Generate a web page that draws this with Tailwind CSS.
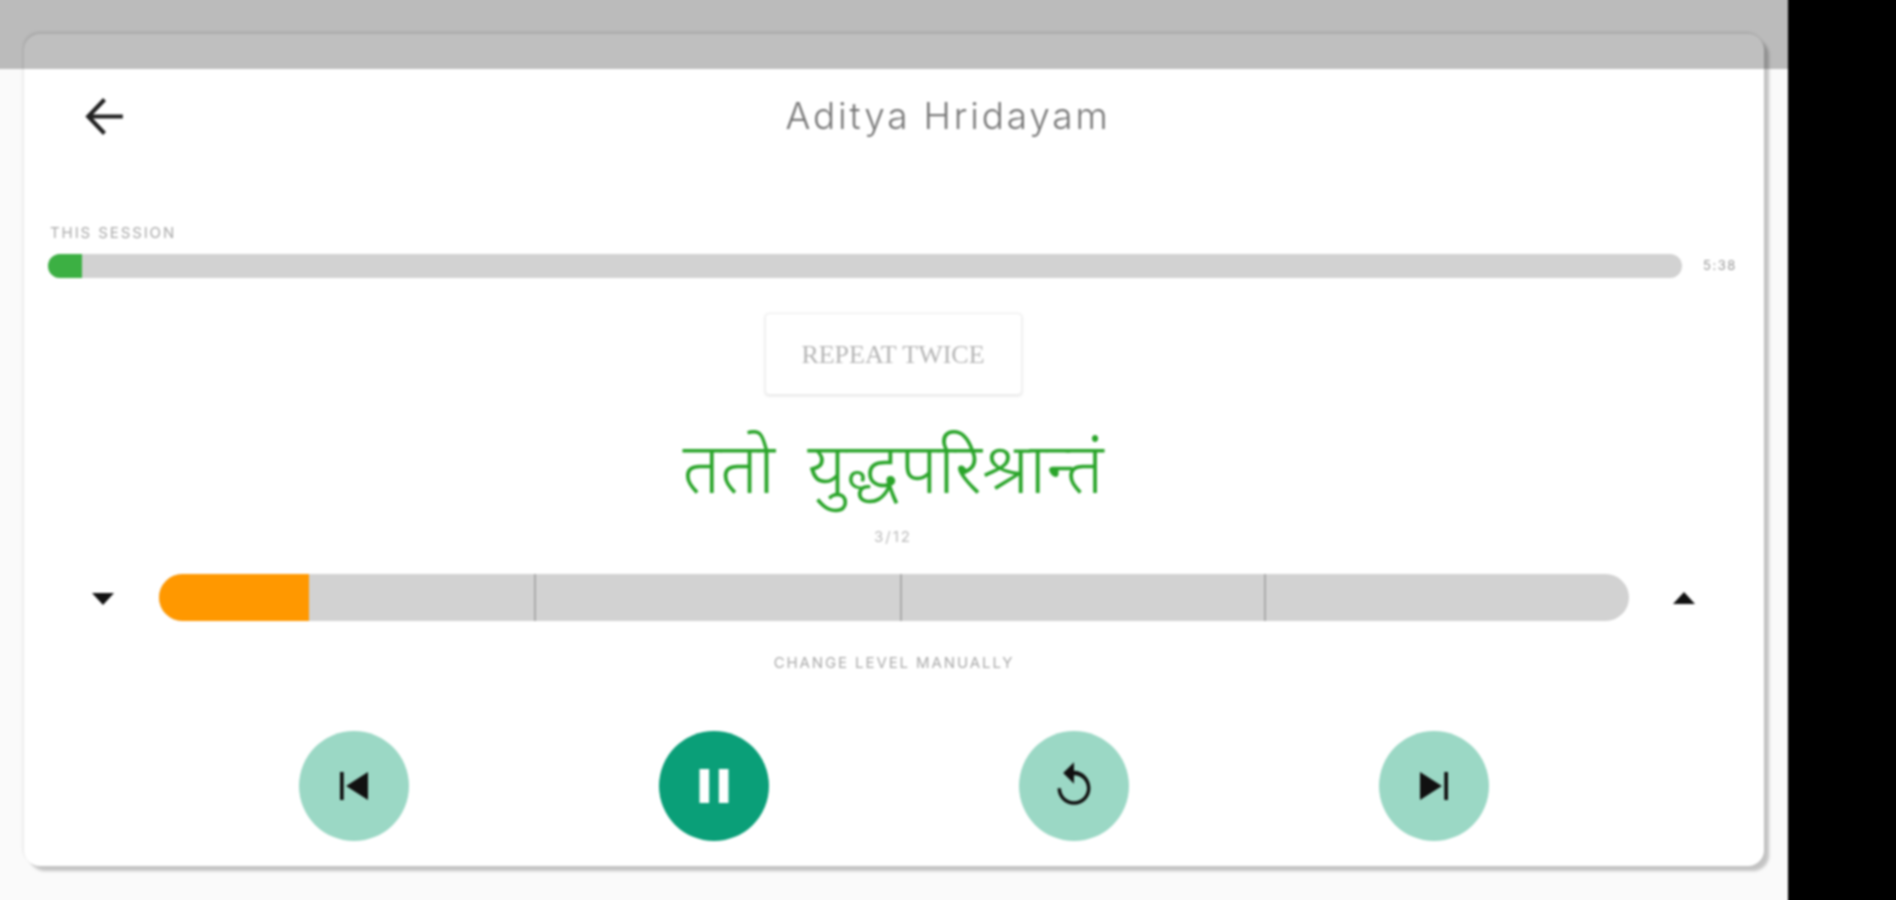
<!DOCTYPE html>
<html lang="en">
<head>
  <meta charset="UTF-8">
  <meta name="viewport" content="width=device-width, initial-scale=1.0">
  <title>Aditya Hridayam</title>
  <script src="https://cdn.jsdelivr.net/npm/@tailwindcss/browser@4"></script>
</head>
<body class="bg-black font-['Inter',sans-serif] overflow-hidden">
  <div class="w-[1896px] h-[900px] overflow-hidden">
  <!-- soft layer runs 8px past the window so the blur doesn't fade at the edges -->
  <div class="-ml-[8px] -mt-[8px] w-[1912px] h-[916px] flex blur-[1px]">
    <main class="relative w-[1796px] h-[916px] bg-[#fafafa] pl-[32px] pt-[42px]">
      <div class="w-[1740px] h-[832px] bg-white rounded-[16px] shadow-[5px_5px_3px_rgba(0,0,0,0.22),-1px_-2px_3px_rgba(0,0,0,0.1)] flex flex-col">

        <!-- header -->
        <div class="flex items-center h-[44px] mt-[60px] pl-[62px]">
          <button class="w-[36px] h-[36px] flex items-center justify-center">
            <svg class="w-[55px] h-[55px] shrink-0" viewBox="0 0 24 24" fill="none" stroke="#222" stroke-width="1.8"><path d="M20 12H5.5M12 4.6 4.9 12l7.1 7.4"/></svg>
          </button>
          <h1 class="ml-[664px] w-[324px] flex justify-center whitespace-nowrap text-[37px] font-light tracking-[2.8px] text-[#777]">Aditya Hridayam</h1>
        </div>

        <!-- session progress -->
        <div class="mt-[85px] pl-[26px] text-[15px] leading-[20px] text-[#aaa] tracking-[1.9px]">THIS SESSION</div>
        <div class="mt-[11px] pl-[24px] flex items-center">
          <div class="w-[1634px] h-[24px] rounded-full bg-[#d2d2d2] overflow-hidden">
            <div class="w-[34px] h-full bg-[#3cb043]"></div>
          </div>
          <span class="ml-[21px] text-[13px] text-[#999] tracking-[1.5px]">5:38</span>
        </div>

        <div class="flex flex-col items-center pr-[2px]">
          <div class="mt-[35px] w-[257px] h-[82px] rounded-[4px] bg-white border border-[#eee] shadow-[0_1px_3px_rgba(0,0,0,0.12)] flex items-center justify-center font-['Liberation_Serif',serif] text-[26px] text-[#b5b5b5]">REPEAT TWICE</div>
          <div class="mt-[32px] h-[93px] leading-[98px] text-[70px] font-light [word-spacing:14px] text-[#2aa52a] whitespace-nowrap font-['Noto_Sans_Devanagari','Lohit_Devanagari','FreeSerif','Noto_Sans',sans-serif]">ततो युद्धपरिश्रान्तं</div>
          <div class="mt-[7px] h-[20px] leading-[20px] text-[15px] text-[#bbb] tracking-[2px]">3/12</div>
        </div>

        <!-- level bar -->
        <div class="mt-[27px] pl-[57px] flex items-center h-[47px]">
          <svg class="w-[44px] h-[44px]" viewBox="0 0 44 44" fill="#111"><path d="M11 17h22L22 29z"/></svg>
          <div class="ml-[34px] w-[1470px] h-[47px] rounded-full bg-[#d2d2d2] overflow-hidden flex">
            <div class="w-[150px] bg-[#ff9800]"></div>
            <div class="w-[227px] border-r-2 border-[#aaa]"></div>
            <div class="w-[366px] border-r-2 border-[#aaa]"></div>
            <div class="w-[364px] border-r-2 border-[#aaa]"></div>
          </div>
          <svg class="ml-[33px] w-[44px] h-[44px]" viewBox="0 0 44 44" fill="#111"><path d="M11 28h22L22 16z"/></svg>
        </div>
        <div class="mt-[32px] text-center h-[20px] leading-[20px] text-[15px] text-[#aaa] tracking-[1.9px]">CHANGE LEVEL MANUALLY</div>

        <!-- controls -->
        <div class="mt-[58px] flex justify-center gap-[250px]">
          <button class="w-[110px] h-[110px] rounded-full bg-[#9bd8c5] flex items-center justify-center">
            <svg class="w-[56px] h-[56px]" viewBox="0 0 24 24" fill="#111"><path d="M6 6h1.6v12H6zm2.6 6l9.4 6V6z"/></svg>
          </button>
          <button class="w-[110px] h-[110px] rounded-full bg-[#0a9f78] flex items-center justify-center">
            <svg class="w-[58px] h-[58px]" viewBox="0 0 24 24" fill="#fff"><path d="M6 5h4v14H6zm8 0h4v14h-4z"/></svg>
          </button>
          <button class="w-[110px] h-[110px] rounded-full bg-[#9bd8c5] flex items-center justify-center">
            <svg class="w-[52px] h-[52px]" viewBox="0 0 24 24" fill="#111"><path d="M12 5V1L7 6l5 5V7c3.31 0 6 2.69 6 6s-2.69 6-6 6-6-2.69-6-6H4.4c0 4.2 3.4 7.6 7.6 7.6s7.6-3.4 7.6-7.6S16.2 5 12 5z"/></svg>
          </button>
          <button class="w-[110px] h-[110px] rounded-full bg-[#9bd8c5] flex items-center justify-center">
            <svg class="w-[56px] h-[56px]" viewBox="0 0 24 24" fill="#111"><path d="M6 18l9.4-6L6 6v12zM16.4 6v12H18V6h-1.6z"/></svg>
          </button>
        </div>
      </div>

      <!-- status bar scrim -->
      <div class="absolute top-0 left-0 w-full h-[77px] bg-black/25"></div>
    </main>
    <div class="flex-1 bg-black"></div>
  </div>
  </div>
</body>
</html>
